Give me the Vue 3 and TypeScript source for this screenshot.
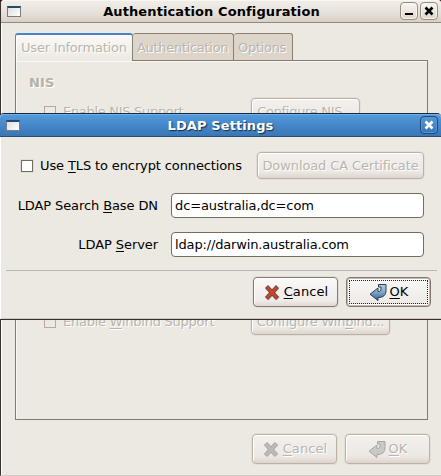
<script setup lang="ts">
import { ref } from 'vue'

const tabs = ['User Information', 'Authentication', 'Options']
const useTls = ref(false)
const baseDn = ref('dc=australia,dc=com')
const server = ref('ldap://darwin.australia.com')
</script>

<template>
  <div class="screen">
    <section class="window">
      <header class="titlebar">
        <i class="window-icon"></i>
        <h1 class="title main-title">Authentication Configuration</h1>
        <button class="control" aria-label="Minimize">
          <svg width="16" height="16" viewBox="0 0 16 16"><path d="M4 10h8v2H4z" fill="#000" /></svg>
        </button>
        <button class="control" aria-label="Close">
          <svg width="16" height="16" viewBox="0 0 16 16"><path d="M4.500 4.500l7 7M11.500 4.500l-7 7" stroke="#000" stroke-width="2.600" /></svg>
        </button>
      </header>
      <div class="content">
        <nav class="tabs">
          <div v-for="(tab, i) in tabs" :key="tab" class="tab" :class="['tab-' + i, { active: i === 0 }]">
            <span>{{ tab }}</span>
          </div>
        </nav>
        <div class="panel">
          <h2 class="heading">NIS</h2>
          <div class="option">
            <i class="check"></i><span class="option-label nis">Enable NIS Support</span>
            <button class="btn disabled nis-btn" disabled><span>Configure NIS...</span></button>
          </div>
          <div class="option last">
            <i class="check"></i><span class="option-label winbind">Enable <u>W</u>inbind Support</span>
            <button class="btn disabled winbind-btn" disabled><span>Configure Win<u>b</u>ind...</span></button>
          </div>
        </div>
        <footer class="actions">
          <button class="btn action disabled" disabled>
            <svg class="cross" width="18" height="18" viewBox="0 0 18 18">
              <path d="M3.500 3.500l11 12M14.500 3.500l-11 12" stroke="#aaa8a4" stroke-width="4.800" />
              <path d="M4 4l10 11M14 4L4 15" stroke="#bdbbb7" stroke-width="2.800" />
            </svg>
            <span><u>C</u>ancel</span>
          </button>
          <button class="btn action ok disabled" disabled>
            <svg class="arrow" width="18" height="18" viewBox="0 0 18 18">
              <path d="M9.500 1.500h7.500v6c0 4.500-2.500 7-8 7v3L1 11.200 9 5v3.500c2.200 0 3-.8 3-2.500V4H9.500z" fill="#cbc9c5" stroke="#a8a6a1" />
            </svg>
            <span><u>O</u>K</span>
          </button>
        </footer>
      </div>
    </section>

    <section class="dialog" role="dialog">
      <header class="titlebar blue">
        <i class="window-icon"></i>
        <h1 class="title dialog-title">LDAP Settings</h1>
        <button class="control" aria-label="Close">
          <svg width="16" height="16" viewBox="0 0 16 16"><path d="M4.500 4.500l7 7M11.500 4.500l-7 7" stroke="#fff" stroke-width="2.600" /></svg>
        </button>
      </header>
      <div class="form">
        <div class="tls-row">
          <i class="check live" role="checkbox" :aria-checked="useTls" @click="useTls = !useTls"></i>
          <span class="tls">Use <u>T</u>LS to encrypt connections</span>
          <button class="btn disabled download" disabled><span>Download CA Certificate</span></button>
        </div>
        <div class="field">
          <label for="dn" class="dn">LDAP Search <u>B</u>ase DN</label>
          <input id="dn" v-model="baseDn" class="entry" />
        </div>
        <div class="field">
          <label for="server" class="server">LDAP <u>S</u>erver</label>
          <input id="server" v-model="server" class="entry server-entry" />
        </div>
      </div>
      <hr class="rule" />
      <footer class="dialog-actions">
        <button class="btn action">
          <svg class="cross" width="18" height="18" viewBox="0 0 18 18">
            <path d="M4 4.500l11 11.500M14.500 4.500L4 16" stroke="#77756f" stroke-width="4.500" opacity=".4" />
            <path d="M3.500 3.500l11 12M14.500 3.500l-11 12" stroke="#66463f" stroke-width="4.200" />
            <path d="M4 4l10 11M14 4L4 15" stroke="#d04528" stroke-width="2.600" />
          </svg>
          <span><u>C</u>ancel</span>
        </button>
        <button class="btn action ok default">
          <svg class="arrow" width="18" height="18" viewBox="0 0 18 18">
            <defs>
              <linearGradient id="steel" x1="0" y1="0" x2="0" y2="1">
                <stop offset="0" stop-color="#b5cfe4" /><stop offset=".5" stop-color="#7ba5cb" /><stop offset="1" stop-color="#2f6093" />
              </linearGradient>
            </defs>
            <path d="M9.500 1.500h7.500v6c0 4.500-2.500 7-8 7v3L1 11.200 9 5v3.500c2.200 0 3-.8 3-2.500V4H9.500z" fill="url(#steel)" stroke="#2b3c4d" />
          </svg>
          <span><u>O</u>K</span>
        </button>
      </footer>
    </section>
  </div>
</template>

<style>
body { background: #ece9e2; overflow: hidden; }
</style>

<style scoped>
* { box-sizing: border-box; }
.screen { position: relative; width: 441px; height: 476px; overflow: hidden; background: #51080b; color: #000; font: 13px/16px "DejaVu Sans", sans-serif; }
span, label { white-space: nowrap; }
u { text-decoration: underline; text-underline-offset: 2px; text-decoration-thickness: 1px; text-decoration-skip-ink: none; }
.window { height: 476px; border-left: 1px solid #39302d; border-bottom: 1px solid #d3cbc2; border-top-left-radius: 4px; border-top-right-radius: 3px; box-shadow: inset 1px 0 #fff; background: #ece9e2; }
.titlebar { display: flex; align-items: center; height: 23px; padding: 0 3px 0 6px; border-top: 1px solid #f8f6f3; border-bottom: 1px solid #95897c; background: linear-gradient(#f0ede8, #e7e1da 55%, #d8d0c6); border-radius: 4px 4px 0 0; gap: 2px; }
.window-icon { width: 14px; height: 11px; margin-bottom: 1px; border: 1px solid #777d83; border-top: 2px solid #244a73; background: linear-gradient(135deg, #dedede, #fff); }
.title { flex: 1; margin: 0; text-align: center; font-size: 13px; line-height: 16px; font-weight: bold; letter-spacing: .1px; white-space: nowrap; }
.main-title { padding-left: 2px; }
.control { display: flex; width: 18px; height: 18px; margin-bottom: 1px; padding: 0; border: 1px solid #998c7e; border-radius: 4px; background: linear-gradient(#f8f6f3, #ddd6ce); box-shadow: inset 0 0 0 1px #f7f4f0; }
.control svg { flex: none; }
.content { display: flex; flex-direction: column; padding: 10px 13px 0 14px; }
.tabs { display: flex; height: 27px; }
.tab { height: 27px; padding: 6px 4px 0; border: 1px solid #8a7e72; border-bottom: 0; border-left: 0; border-radius: 3px 3px 0 0; background: #ddd4ca; color: #b8b5af; text-shadow: 1px 1px #fff; }
.tab-0 { width: 118px; letter-spacing: -.2px; }
.tab-1 { width: 101px; letter-spacing: -.3px; }
.tab-2 { width: 59px; letter-spacing: -.3px; }
.tab.active { position: relative; height: 28px; padding: 5px 4px 0 5px; border-left: 1px solid #8a7e72; border-top: 2px solid #4584ca; background: linear-gradient(#faf9f7, #ece9e2); box-shadow: inset 1px 0 #fff; }
.panel { display: flex; flex-direction: column; height: 360px; padding: 14px 0 84px 13px; border: 1px solid #85796c; box-shadow: inset 1px 1px #faf8f4; }
.heading { margin: 0 0 7px; font-size: 13px; line-height: 16px; letter-spacing: .1px; color: #b4b1aa; text-shadow: 1px 1px #fff; }
.option { display: flex; align-items: center; height: 27px; padding-left: 15px; gap: 7px; color: #b8b5af; text-shadow: 1px 1px #fff; }
.option.last { margin-top: auto; }
.option-label { width: 181px; }
.nis { letter-spacing: -.3px; }
.winbind { letter-spacing: -.25px; }
.check { flex: none; width: 12px; height: 12px; border: 1px solid #b8a999; }
.check.live { border-color: #766b5f; background: #fff; box-shadow: 0 0 0 1px #e2ddd4; }
.btn { display: flex; align-items: center; justify-content: center; flex: none; height: 27px; padding: 0; border: 1px solid #85796d; border-radius: 4px; background: linear-gradient(#faf9f8, #efece9 80%, #dfd9d2); box-shadow: inset 1px 1px #fff, 0 0 0 1px #e3dfd7; color: #000; font: inherit; }
.btn.disabled { border-color: #beb0a2; color: #b8b5af; background: linear-gradient(#f3f0ed, #ece8e4 75%, #ddd5ce); text-shadow: 1px 1px #fff; }
.nis-btn { width: 109px; letter-spacing: -.3px; }
.winbind-btn { width: 139px; letter-spacing: -.25px; }
.actions { display: flex; justify-content: flex-end; gap: 8px; padding-top: 14px; margin-right: -2px; }
.action { width: 85px; height: 30px; gap: 3px; padding-left: 0; }
.action span { letter-spacing: .1px; }
.action svg { margin-top: -1px; flex: none; }
.default { background: linear-gradient(#faf9f8, #ece8e4) padding-box; box-shadow: inset 0 0 0 1px #c4b8ab, inset 0 0 0 2px #fff; outline: 1px dotted #222; outline-offset: -4px; }
.dialog { position: absolute; left: 0; top: 113px; width: 441px; height: 207px; border-top: 1px solid #17293c; border-bottom: 1px solid #39302d; border-radius: 4px 4px 0 0; background: #ece9e2; box-shadow: inset 1px 0 #fff, inset 0 -1px #d1c9c0; }
.blue { border-top: 1px solid #72b0ea; border-bottom-color: #244e77; background: linear-gradient(#5299dc, #4487c9 50%, #3a76b4); }
.blue .title { color: #fff; text-shadow: 1px 1px 1px #102f50; }
.dialog-title { padding-left: 1px; }
.blue .control { border-color: #214a77; background: linear-gradient(#5697d8, #3975b6); box-shadow: inset 0 0 0 1px #5596d5; }
.form { padding: 15px 17px 0 0; }
.tls-row { display: flex; align-items: center; height: 27px; padding-left: 21px; }
.tls { width: 217px; margin-left: 7px; letter-spacing: -.12px; }
.tls-row .btn { margin-left: auto; }
.download { width: 167px; letter-spacing: -.1px; }
.field { display: flex; justify-content: flex-end; align-items: center; height: 25px; margin-top: 14px; gap: 13px; }
.dn { letter-spacing: -.1px; }
.server { letter-spacing: -.08px; }
.entry { width: 253px; height: 25px; padding: 0 0 0 3px; border: 1px solid #766b5f; border-radius: 4px; background: #fff; font: inherit; letter-spacing: -.12px; color: #000; outline: none; }
.server-entry { letter-spacing: -.15px; }
.rule { height: 1px; margin: 13px 4px 0 6px; border: 0; background: #bab8b4; }
.dialog-actions { display: flex; justify-content: flex-end; gap: 8px; padding: 6px 10px 0 0; }
</style>
